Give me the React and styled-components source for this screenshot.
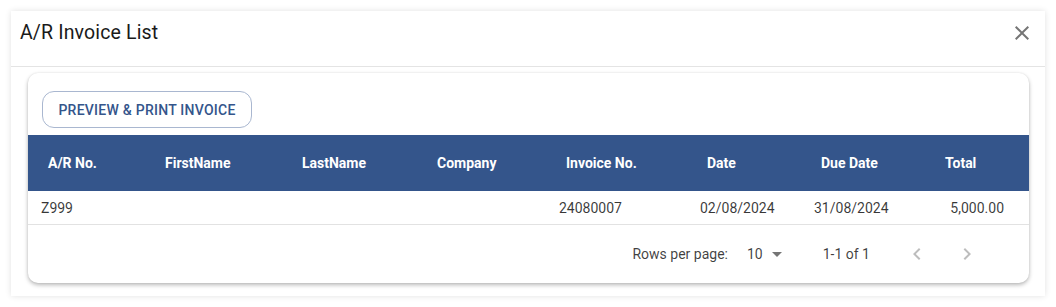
import styled, { createGlobalStyle } from "styled-components";

const GlobalStyle = createGlobalStyle`
  body {
    margin: 0;
    background: #ffffff;
    font-family: Roboto, "Liberation Sans", sans-serif;
  }
`;

const Page = styled.div`
  padding: 11px;
  width: 1034px;
`;

const Dialog = styled.div`
  background: #fff;
  box-shadow: 0 0 6px rgba(0, 0, 0, 0.12);
  display: flex;
  flex-direction: column;
`;

const TitleBar = styled.div`
  height: 56px;
  display: flex;
  align-items: center;
  justify-content: space-between;
  padding: 0 11px 12px 9px;
  border-bottom: 1px solid #e4e4e4;
  box-sizing: border-box;

  h2 {
    margin: 0;
    font-size: 19.5px;
    font-weight: 400;
    color: #1a1a1a;
    letter-spacing: 0.15px;
  }
`;

const IconButton = styled.button`
  border: none;
  background: none;
  padding: 0;
  width: 24px;
  height: 24px;
  display: flex;
  align-items: center;
  justify-content: center;
  color: ${props => (props.disabled ? "rgba(0,0,0,0.26)" : "rgba(0,0,0,0.54)")};
  cursor: pointer;

  svg {
    width: 24px;
    height: 24px;
    fill: currentColor;
  }
`;

const Content = styled.div`
  padding: 6px 16px 13px 17px;
`;

const Card = styled.div`
  background: #fff;
  border-radius: 10px;
  box-shadow: 0 2px 4px rgba(0, 0, 0, 0.28), 0 0 2px rgba(0, 0, 0, 0.08);
  padding-top: 18px;
  overflow: hidden;
`;

const Toolbar = styled.div`
  padding: 0 14px 7px;
`;

const Button = styled.button`
  height: 37px;
  width: 210px;
  border: 1px solid #a9b7d0;
  border-radius: 12px;
  background: #fff;
  color: #34558b;
  font-family: Roboto, "Liberation Sans", sans-serif;
  font-size: 14px;
  font-weight: 500;
  letter-spacing: 0.25px;
  text-transform: uppercase;
  cursor: pointer;
`;

const Table = styled.table`
  width: 100%;
  border-collapse: collapse;
  table-layout: fixed;
  font-size: 14px;
`;

const Th = styled.th`
  height: 56px;
  padding: 0 0 0 20px;
  text-align: left;
  background: #34558b;
  color: #fff;
  font-weight: 700;
  white-space: nowrap;
`;

const Td = styled.td`
  height: 33px;
  padding: ${props => (props.right ? "0 25px 0 0" : "0 0 0 13px")};
  text-align: ${props => (props.right ? "right" : "left")};
  color: rgba(0, 0, 0, 0.78);
  border-bottom: 1px solid #e2e2e2;
  white-space: nowrap;
`;

const Footer = styled.div`
  height: 58px;
  display: flex;
  align-items: center;
  justify-content: flex-end;
  padding-right: 50px;
  font-size: 14px;
  color: rgba(0, 0, 0, 0.75);
`;

const SelectBox = styled.div`
  display: flex;
  align-items: center;
  margin-left: 19px;

  svg {
    width: 24px;
    height: 24px;
    fill: rgba(0, 0, 0, 0.54);
    margin-left: 2px;
  }
`;

const Range = styled.span`
  margin-left: 34px;
  margin-right: 35px;
`;

const Actions = styled.div`
  display: flex;
  gap: 26px;
`;

const columns = [
  { label: "A/R No.", width: 117 },
  { label: "FirstName", width: 137 },
  { label: "LastName", width: 135 },
  { label: "Company", width: 129 },
  { label: "Invoice No.", width: 141 },
  { label: "Date", width: 114 },
  { label: "Due Date", width: 124 },
  { label: "Total", width: 104 },
];

const rows = [
  ["Z999", "", "", "", "24080007", "02/08/2024", "31/08/2024", "5,000.00"],
];

export default function App() {
  return (
    <Page>
      <GlobalStyle />
      <Dialog>
        <TitleBar>
          <h2>A/R Invoice List</h2>
          <IconButton aria-label="close">
            <svg viewBox="0 0 24 24">
              <path d="M19 6.41 17.59 5 12 10.59 6.41 5 5 6.41 10.59 12 5 17.59 6.41 19 12 13.41 17.59 19 19 17.59 13.41 12z" />
            </svg>
          </IconButton>
        </TitleBar>
        <Content>
          <Card>
            <Toolbar>
              <Button>Preview &amp; Print Invoice</Button>
            </Toolbar>
            <Table>
              <colgroup>
                {columns.map(c => (
                  <col key={c.label} style={{ width: c.width }} />
                ))}
              </colgroup>
              <thead>
                <tr>
                  {columns.map(c => (
                    <Th key={c.label}>{c.label}</Th>
                  ))}
                </tr>
              </thead>
              <tbody>
                {rows.map((r, i) => (
                  <tr key={i}>
                    {r.map((v, j) => (
                      <Td key={j} right={j === r.length - 1}>
                        {v}
                      </Td>
                    ))}
                  </tr>
                ))}
              </tbody>
            </Table>
            <Footer>
              <span>Rows per page:</span>
              <SelectBox>
                <span>10</span>
                <svg viewBox="0 0 24 24">
                  <path d="M7 10l5 5 5-5z" />
                </svg>
              </SelectBox>
              <Range>1-1 of 1</Range>
              <Actions>
                <IconButton disabled aria-label="previous page">
                  <svg viewBox="0 0 24 24">
                    <path d="M15.41 16.59 10.83 12l4.58-4.59L14 6l-6 6 6 6 1.41-1.41z" />
                  </svg>
                </IconButton>
                <IconButton disabled aria-label="next page">
                  <svg viewBox="0 0 24 24">
                    <path d="M8.59 16.59 13.17 12 8.59 7.41 10 6l6 6-6 6-1.41-1.41z" />
                  </svg>
                </IconButton>
              </Actions>
            </Footer>
          </Card>
        </Content>
      </Dialog>
    </Page>
  );
}
